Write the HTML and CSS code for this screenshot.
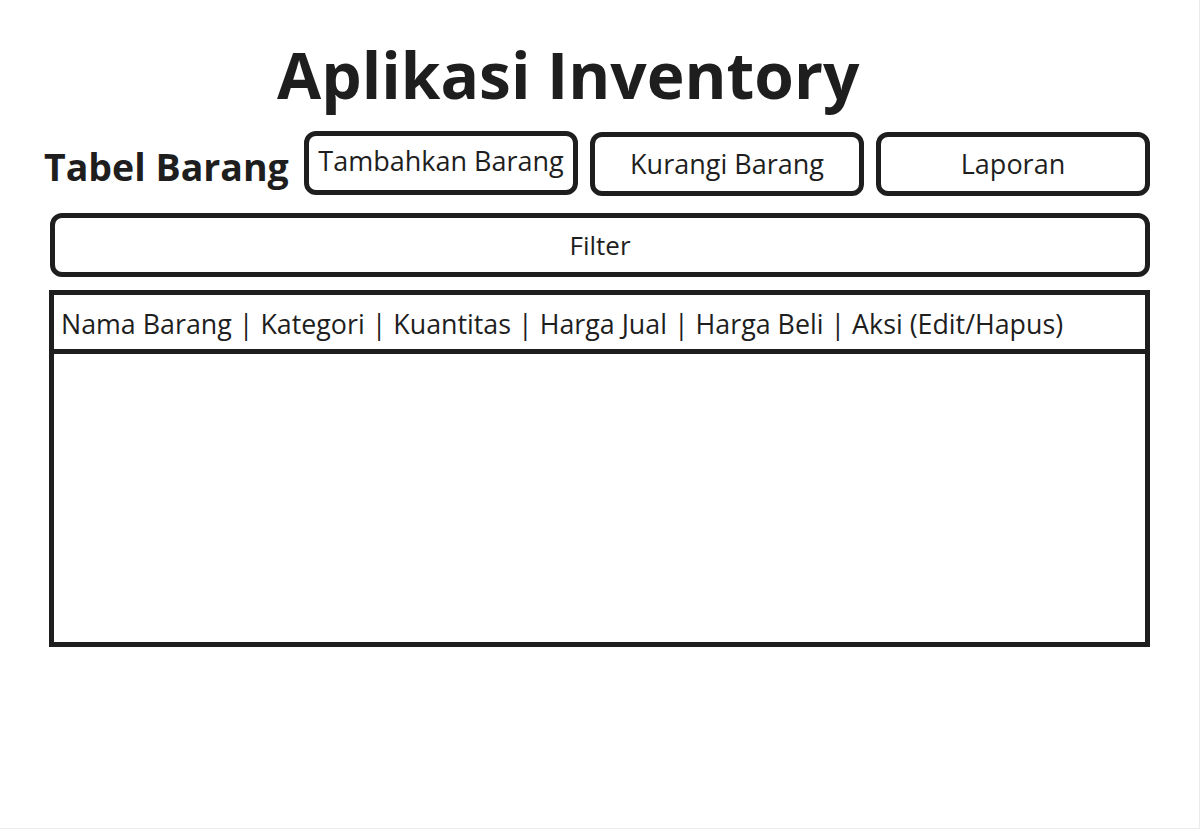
FILE: index.html
```html
<!DOCTYPE html>
<html>
    <head>
        <title>Aplikasi Inventory</title>
        <link rel="stylesheet" href="styles.css">
    </head>
    <body>
        <div class="page">
            <h1 class="title">Aplikasi Inventory</h1>
            <div class="toolbar">
                <h2 class="subtitle">Tabel Barang</h2>
                <div class="button add">Tambahkan Barang</div>
                <div class="button">Kurangi Barang</div>
                <div class="button">Laporan</div>
            </div>
            <div class="filter">Filter</div>
            <div class="table">
                <div class="table-head">Nama Barang | Kategori | Kuantitas | Harga Jual | Harga Beli | Aksi (Edit/Hapus)</div>
                <div class="table-body"></div>
            </div>
        </div>
    </body>
</html>
```

FILE: styles.css
```css
body {
    margin: 0;
    font-family: "Open Sans", "Noto Sans", sans-serif;
    color: #1e1e1e;
    background: #fff;
}
.page {
    width: 1200px;
    height: 829px;
    border-right: 1px solid #ebebeb;
    border-bottom: 1px solid #ebebeb;
    padding-top: 43px;
    box-sizing: border-box;
}
.title {
    margin: 0 0 0 277px;
    font-size: 64px;
    line-height: 1;
    font-weight: 700;
}
.toolbar {
    display: flex;
    align-items: center;
    margin: 25px 0 0 44px;
    width: 1106px;
}
.subtitle {
    margin: 6px 0 0 0;
    flex: 1;
    white-space: nowrap;
    font-size: 37.5px;
    line-height: 1;
    font-weight: 700;
}
.button, .filter {
    border: 5px solid #1e1e1e;
    border-radius: 12px;
    height: 64px;
    box-sizing: border-box;
    display: flex;
    align-items: center;
    justify-content: center;
    font-size: 27px;
    white-space: nowrap;
}
.button {
    flex: none;
    width: 274px;
    margin-left: 12px;
    padding-bottom: 2px;
}
.add {
    margin: -3px 0 0 0;
    padding-bottom: 5px;
}
.filter {
    margin: 17px 0 0 50px;
    width: 1100px;
    font-size: 26px;
}
.table {
    margin: 13px 0 0 49px;
    width: 1101px;
    height: 357px;
    border: 5px solid #1e1e1e;
    box-sizing: border-box;
}
.table-head {
    height: 59px;
    border-bottom: 5px solid #1e1e1e;
    box-sizing: border-box;
    padding: 12px 0 0 7px;
    font-size: 26.8px;
    line-height: 1.3;
    white-space: nowrap;
}
```
